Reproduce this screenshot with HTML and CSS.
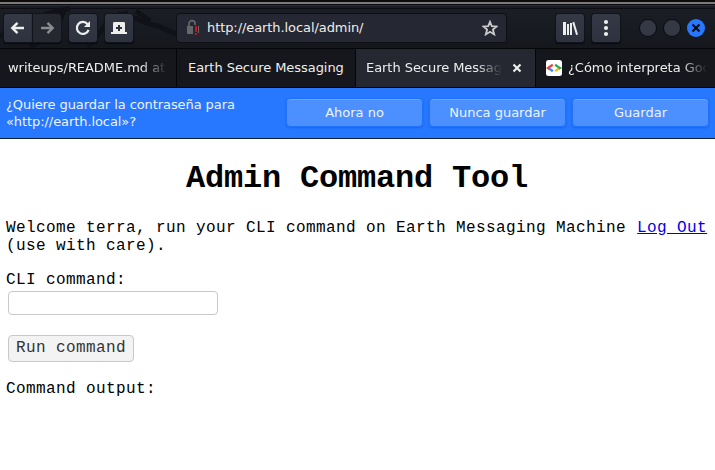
FILE: index.html
```
<!DOCTYPE html>
<html lang="es">
<head>
<meta charset="utf-8">
<title>Earth Secure Messaging</title>
<link rel="stylesheet" href="styles.css">
</head>
<body>
<div class="frame"></div>
<header class="toolbar">
  <svg class="art" width="180" height="43" viewBox="0 0 180 43"><g fill="none" stroke="#101218" stroke-width="5"><path d="M0 31C25 22 38 7 70 4"/><path d="M30 42C45 35 58 22 64 6"/><path d="M88 42C100 30 104 14 128 8M118 9c18 2 26 10 40 12l18 8M136 6l14 10"/></g></svg>
  <div class="nav">
    <button class="tool back" aria-label="Atrás"><svg width="28" height="28" viewBox="0 0 28 28"><path d="M20 14H9M13.5 8.8 8.3 14l5.2 5.2" fill="none" stroke="#eeeeec" stroke-width="2.4"/></svg></button>
    <button class="tool forward" aria-label="Adelante"><svg width="28" height="28" viewBox="0 0 28 28"><path d="M8 14h11M14.5 8.8l5.2 5.2-5.2 5.2" fill="none" stroke="#8b8c90" stroke-width="2.4"/></svg></button>
  </div>
  <button class="tool reload" aria-label="Recargar"><svg width="28" height="28" viewBox="0 0 28 28"><path d="M18.6 10.2A6 6 0 1 0 19.6 15.8" fill="none" stroke="#eeeeec" stroke-width="2.2"/><path d="M21 7v6h-6z" fill="#eeeeec"/></svg></button>
  <button class="tool newtab" aria-label="Nueva pestaña"><svg width="28" height="28" viewBox="0 0 28 28"><path d="M8 18V9.3Q8 8 9.3 8h9.4Q20 8 20 9.3V18h2v2H6v-2z" fill="#eeeeec"/><path d="M14 11v6M11 14h6" stroke="#2d313d" stroke-width="2"/></svg></button>
  <div class="url">
    <svg class="lock" width="14" height="16" viewBox="0 0 14 16"><path d="M3 8V4.7a3 3 0 0 1 6 0V6" fill="none" stroke="#66676b" stroke-width="1.7"/><path d="M1 7h6v8H2q-1 0-1-1z" fill="#66676b"/><path d="M12 7h1v7h-1z" fill="#66676b"/><path d="M9 7h2v6H9zm0 7h2v2H9z" fill="#c8141e"/></svg>
    <span class="address">http://earth.local/admin/</span>
    <svg class="star" width="16" height="16" viewBox="0 0 16 16"><path d="m8 1.8 1.8 4.4 4.9.3-3.8 3.1 1.3 4.8L8 11.8l-4.2 2.6 1.3-4.8-3.8-3.1 4.9-.3z" fill="none" stroke="#c9c9c9" stroke-width="1.8"/></svg>
  </div>
  <button class="tool library" aria-label="Catálogo"><svg width="28" height="28" viewBox="0 0 28 28"><path d="M7 8h3v13H7zM11 10h2v11h-2zM14 9h2v12h-2zM16.3 8.4l1.9-.6L22 20.4l-1.9.6z" fill="#eeeeec"/></svg></button>
  <button class="tool menu" aria-label="Menú"><svg width="28" height="28" viewBox="0 0 28 28"><g fill="#eeeeec"><circle cx="14" cy="8" r="2.1"/><circle cx="14" cy="14" r="2.1"/><circle cx="14" cy="20" r="2.1"/></g></svg></button>
  <div class="window-controls">
    <i class="dot"></i><i class="dot"></i>
    <i class="dot close"><svg width="18" height="18" viewBox="0 0 18 18"><path d="m5.5 5.5 7 7m0-7-7 7" stroke="#0b0d14" stroke-width="2.2"/></svg></i>
  </div>
</header>
<nav class="tabs">
  <div class="tab first"><span class="label">writeups/README.md at</span></div>
  <div class="tab second"><span>Earth Secure Messaging</span></div>
  <div class="tab active"><span class="label">Earth Secure Messaging</span><svg width="10" height="10" viewBox="0 0 10 10"><path d="m1.5 1.5 7 7m0-7-7 7" stroke="#eeeeec" stroke-width="2.2"/></svg></div>
  <div class="tab last"><svg class="favicon" width="16" height="16" viewBox="0 0 16 16"><rect width="16" height="16" rx="2.5" fill="#fff"/><g fill="none" stroke-width="2.3"><path d="M6.8 4.8 4.2 6.4" stroke="#ea4335"/><path d="M4.6 6.1 2 8l1.7 1.2" stroke="#ea4335"/><path d="m3 8.4 3.8 2.8" stroke="#4285f4"/><path d="m9.2 4.8 3.8 2.8" stroke="#34a853"/><path d="M12.5 7.2 14 8l-1.5 1" stroke="#34a853"/><path d="m12.7 8.6-3.5 2.6" stroke="#fbbc05"/></g></svg><span class="label">¿Cómo interpreta Google</span></div>
</nav>
<section class="notice">
  <p class="question">¿Quiere guardar la contraseña para<br>«http://earth.local»?</p>
  <button class="choice">Ahora no</button>
  <button class="choice">Nunca guardar</button>
  <button class="choice">Guardar</button>
</section>
<main class="page">
  <h1>Admin Command Tool</h1>
  <p class="welcome">Welcome terra, run your CLI command on Earth Messaging Machine <a href="#">Log Out</a> (use with care).</p>
  <form>
    <label for="cli">CLI command:</label>
    <input id="cli" type="text">
    <button class="run" type="button">Run command</button>
  </form>
  <p class="output">Command output:</p>
</main>
</body>
</html>
```
FILE: styles.css
```
* { box-sizing: border-box; }
body {
  margin: 0;
  height: 470px;
  overflow: hidden;
  background: #fff;
  font: 13px/17px "DejaVu Sans", sans-serif;
  letter-spacing: -.05px;
}
svg { display: block; flex: none; }
button { font: inherit; padding: 0; border: 0; }
.frame {
  height: 5px;
  background: linear-gradient(#0c0b0a 0 2px, #7b7979 2px 4px, #0c0d10 4px);
}
.toolbar {
  position: relative;
  z-index: 0;
  height: 44px;
  padding: 9px 10px 0 4px;
  display: flex;
  align-items: flex-start;
  border-bottom: 1px solid #050608;
  background: linear-gradient(#252a34 0 1px, #191c24 1px 3px, #0c0e13 3px 4px, #1c1e26 4px, #15171d);
}
.art { position: absolute; z-index: -1; left: 0; top: 0; }
.tool {
  width: 28px;
  height: 28px;
  border-radius: 3px;
  background: linear-gradient(#343945, #2e323e);
  box-shadow: 0 0 0 1px #12141b, 0 1px 1px 1px #090b10;
}
.nav { display: flex; gap: 1px; margin-right: 8px; }
.back { border-radius: 3px 0 0 3px; }
.forward { border-radius: 0 3px 3px 0; background: #252731; }
.reload { margin-right: 8px; }
.newtab { margin-right: 43px; }
.url {
  width: 331px;
  height: 30px;
  margin: -1px 49px 0 0;
  padding: 0 8px 2px 10px;
  display: flex;
  align-items: center;
  border: 1px solid #0d0f15;
  border-radius: 4px;
  background: #252732;
}
.lock { margin: 0 6px 0 -1px; }
.star { margin-top: 1px; }
.address { flex: 1; color: #eeeeec; padding-left: 1px; letter-spacing: -.08px; }
.library { margin-right: 8px; }
.menu { margin-right: 19px; }
.window-controls { display: flex; gap: 6px; margin-top: 5px; }
.dot { width: 18px; height: 18px; border-radius: 50%; border: 1px solid #090b10; background: #343945; }
.close { border: 0; background: #2777ff; }
.tabs {
  height: 39px;
  display: grid;
  grid-template-columns: 176px 179px 180px 180px;
  border-bottom: 1px solid #030408;
  background: #15171d;
  color: #eeeeec;
}
.tab {
  display: flex;
  align-items: center;
  min-width: 0;
  overflow: hidden;
  white-space: nowrap;
  border-left: 1px solid #050609;
}
.tab span { margin-top: -2px; }
.first { padding: 0 9px 0 8px; border: 0; }
.second { padding-left: 11px; }
.active { padding: 0 13px 0 10px; background: #252731; }
.last { padding: 0 8px 0 10px; }
.label {
  flex: 1;
  overflow: hidden;
  mask-image: linear-gradient(to left, transparent, #000 26px);
}
.active svg { margin-left: 10px; }
.favicon { margin-right: 6px; }
.notice {
  height: 51px;
  padding: 10px 6px 0 6px;
  display: flex;
  gap: 6px;
  border-bottom: 1px solid #10203c;
  background: #2777ff;
  color: #eef4ff;
}
.question { flex: 1; margin: -2px 0 0; line-height: 17px; letter-spacing: -.08px; }
.choice {
  width: 137px;
  height: 29px;
  padding-bottom: 1px;
  border: 1px solid #2172fa;
  border-radius: 4px;
  background: #4c8fff;
  color: inherit;
  box-shadow: inset 0 1px #6ea4ff, 0 1px 2px #1668ed;
}
.page {
  padding: 0 6px;
  color: #000;
  font: 16px/18px "Liberation Mono", monospace;
  letter-spacing: .4px;
}
h1 {
  margin: 0;
  padding: 22px 1px 0 0;
  font-size: 32px;
  line-height: 36px;
  letter-spacing: -.2px;
  text-align: center;
}
.welcome { margin: 22px -6px 16px 0; }
a { color: #0000ee; margin-left: 1px; }
form { display: flex; flex-direction: column; align-items: flex-start; }
input {
  width: 210px;
  height: 24px;
  margin: 2px 2px 20px;
  border: 1px solid #c8c8c8;
  border-radius: 4px;
  background: #fff;
}
.run {
  width: 126px;
  height: 27px;
  margin-left: 2px;
  padding-bottom: 2px;
  border: 1px solid #c8c8c8;
  border-radius: 4px;
  background: #f3f3f3;
  color: #333;
  letter-spacing: inherit;
}
.output { margin: 18px 0 0; }
```
